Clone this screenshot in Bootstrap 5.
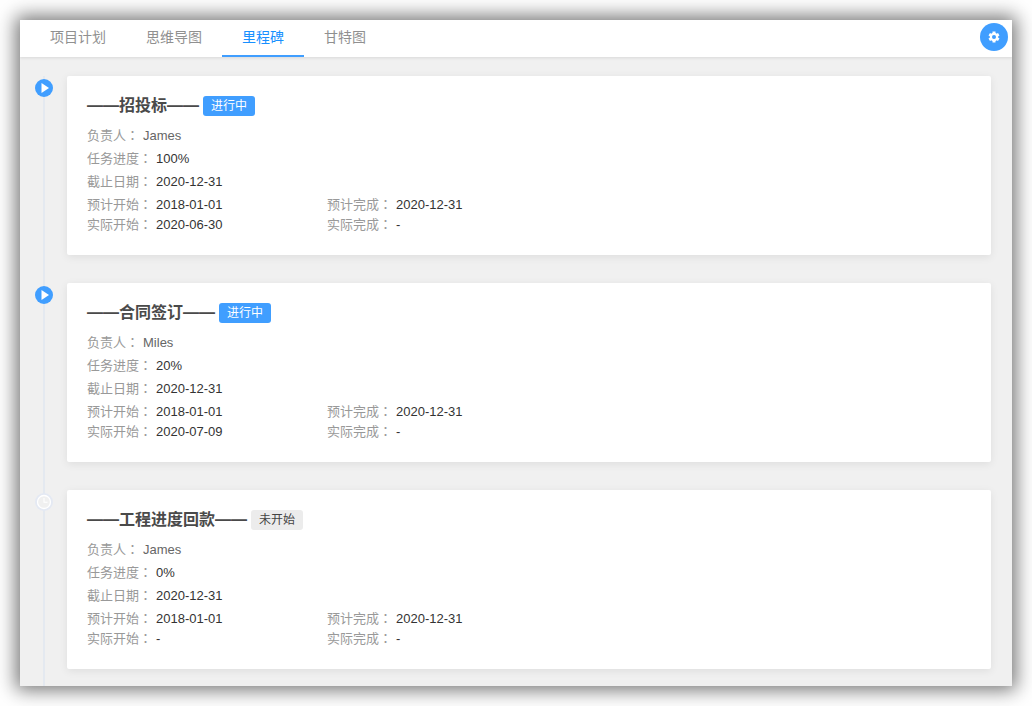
<!DOCTYPE html>
<html lang="zh">
<head>
<meta charset="utf-8">
<link href="https://cdn.jsdelivr.net/npm/bootstrap@5.3.0/dist/css/bootstrap.min.css" rel="stylesheet">
<style>
html,body{height:100%}
body{background:#fff;padding:20px;font-family:"Liberation Sans","Noto Sans CJK SC",sans-serif;font-size:13px;color:#333;overflow:hidden}
.win{height:666px;background:#f0f0f0;box-shadow:0 0 18px 4px rgba(0,0,0,.55);display:flex;flex-direction:column;overflow:hidden}
.topbar{height:37px;background:#fff;box-shadow:0 1px 3px rgba(0,0,0,.1);padding-left:10px;position:relative;flex:none}
.tabitem{padding:0 20px;height:37px;line-height:34px;font-size:14px;color:#909090;border-bottom:2px solid transparent}
.tabitem.on{color:#1890ff;border-bottom-color:#409eff}
.gear{position:absolute;right:4px;top:3px;width:28px;height:28px;border-radius:50%;background:#409eff}
.tl{padding:19px 21px 0 47px;position:relative;flex:1}
.tl-line{position:absolute;left:23px;top:19px;bottom:0;width:2px;background:#e4e9f0}
.item{position:relative;height:179px;margin-bottom:28px}
.tl-item-dot{position:absolute;left:-32px;top:3px;width:18px;height:18px}
.box{height:179px;background:#fff;border-radius:2px;box-shadow:0 2px 8px rgba(0,0,0,.08);padding:20px}
.ttl{font-size:16px;font-weight:700;color:#4a4a4a;line-height:20px;height:20px;margin-bottom:7px}
.tag{display:inline-block;height:20px;line-height:20px;padding:0 8px;font-size:12px;font-weight:400;border-radius:3px;margin-left:4px;vertical-align:top}
.tag-run{background:#409eff;color:#fff}
.tag-wait{background:#ececec;color:#444}
.ln{height:23px;line-height:23px}
.ln2{height:20px;line-height:20px}
.ln2-first{margin-top:2px}
.lb{color:#999}
.colon{font-family:"Noto Sans CJK TC",sans-serif}
.v{color:#333;margin-left:4px}
.vp{color:#666;margin-left:4px}
.cell{width:240px}
</style>
</head>
<body>
<div class="win">
  <div class="topbar d-flex">
    <div class="tabitem">项目计划</div>
    <div class="tabitem">思维导图</div>
    <div class="tabitem on">里程碑</div>
    <div class="tabitem">甘特图</div>
    <div class="gear d-flex align-items-center justify-content-center">
      <svg width="12" height="12" viewBox="0 0 24 24"><g stroke="#fff" stroke-width="6"><path d="M12 1v22"/><path d="M2.500 6.500l19 11"/><path d="M2.500 17.500l19-11"/></g><circle cx="12" cy="12" r="8.500" fill="#fff"/><circle cx="12" cy="12" r="4" fill="#409eff"/></svg>
    </div>
  </div>
  <div class="tl">
    <div class="tl-line"></div>

    <div class="item">
      <svg class="tl-item-dot" viewBox="0 0 18 18"><circle cx="9" cy="9" r="9" fill="#409eff"/><path d="M6.500 4v10l7.500-5z" fill="#fff"/></svg>
      <div class="box">
        <div class="ttl">——招投标——<span class="tag tag-run">进行中</span></div>
        <div class="ln"><span class="lb">负责人<span class="colon" lang="zh-Hant">：</span></span><span class="vp">James</span></div>
        <div class="ln"><span class="lb">任务进度<span class="colon" lang="zh-Hant">：</span></span><span class="v">100%</span></div>
        <div class="ln"><span class="lb">截止日期<span class="colon" lang="zh-Hant">：</span></span><span class="v">2020-12-31</span></div>
        <div class="d-flex ln2 ln2-first"><div class="cell"><span class="lb">预计开始<span class="colon" lang="zh-Hant">：</span></span><span class="v">2018-01-01</span></div><div class="cell"><span class="lb">预计完成<span class="colon" lang="zh-Hant">：</span></span><span class="v">2020-12-31</span></div></div>
        <div class="d-flex ln2"><div class="cell"><span class="lb">实际开始<span class="colon" lang="zh-Hant">：</span></span><span class="v">2020-06-30</span></div><div class="cell"><span class="lb">实际完成<span class="colon" lang="zh-Hant">：</span></span><span class="v">-</span></div></div>
      </div>
    </div>

    <div class="item">
      <svg class="tl-item-dot" viewBox="0 0 18 18"><circle cx="9" cy="9" r="9" fill="#409eff"/><path d="M6.500 4v10l7.500-5z" fill="#fff"/></svg>
      <div class="box">
        <div class="ttl">——合同签订——<span class="tag tag-run">进行中</span></div>
        <div class="ln"><span class="lb">负责人<span class="colon" lang="zh-Hant">：</span></span><span class="vp">Miles</span></div>
        <div class="ln"><span class="lb">任务进度<span class="colon" lang="zh-Hant">：</span></span><span class="v">20%</span></div>
        <div class="ln"><span class="lb">截止日期<span class="colon" lang="zh-Hant">：</span></span><span class="v">2020-12-31</span></div>
        <div class="d-flex ln2 ln2-first"><div class="cell"><span class="lb">预计开始<span class="colon" lang="zh-Hant">：</span></span><span class="v">2018-01-01</span></div><div class="cell"><span class="lb">预计完成<span class="colon" lang="zh-Hant">：</span></span><span class="v">2020-12-31</span></div></div>
        <div class="d-flex ln2"><div class="cell"><span class="lb">实际开始<span class="colon" lang="zh-Hant">：</span></span><span class="v">2020-07-09</span></div><div class="cell"><span class="lb">实际完成<span class="colon" lang="zh-Hant">：</span></span><span class="v">-</span></div></div>
      </div>
    </div>

    <div class="item">
      <svg class="tl-item-dot" viewBox="0 0 18 18"><circle cx="9" cy="9" r="9" fill="#e4e9f3"/><circle cx="9" cy="9" r="6.500" fill="#f0f0f0" stroke="#fff" stroke-width="1.300"/><path d="M9 5v4.300h3.500" fill="none" stroke="#fff" stroke-width="1.100"/></svg>
      <div class="box">
        <div class="ttl">——工程进度回款——<span class="tag tag-wait">未开始</span></div>
        <div class="ln"><span class="lb">负责人<span class="colon" lang="zh-Hant">：</span></span><span class="vp">James</span></div>
        <div class="ln"><span class="lb">任务进度<span class="colon" lang="zh-Hant">：</span></span><span class="v">0%</span></div>
        <div class="ln"><span class="lb">截止日期<span class="colon" lang="zh-Hant">：</span></span><span class="v">2020-12-31</span></div>
        <div class="d-flex ln2 ln2-first"><div class="cell"><span class="lb">预计开始<span class="colon" lang="zh-Hant">：</span></span><span class="v">2018-01-01</span></div><div class="cell"><span class="lb">预计完成<span class="colon" lang="zh-Hant">：</span></span><span class="v">2020-12-31</span></div></div>
        <div class="d-flex ln2"><div class="cell"><span class="lb">实际开始<span class="colon" lang="zh-Hant">：</span></span><span class="v">-</span></div><div class="cell"><span class="lb">实际完成<span class="colon" lang="zh-Hant">：</span></span><span class="v">-</span></div></div>
      </div>
    </div>
  </div>
</div>
<script src="https://cdn.jsdelivr.net/npm/bootstrap@5.3.0/dist/js/bootstrap.bundle.min.js"></script>
</body>
</html>
